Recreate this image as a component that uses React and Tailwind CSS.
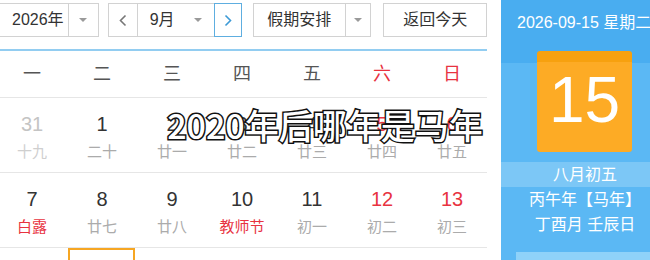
import { useState } from 'react'

const weekdays = [
  { t: '一' }, { t: '二' }, { t: '三' }, { t: '四' }, { t: '五' },
  { t: '六', red: true }, { t: '日', red: true },
]

const rows = [
  [
    { d: '31', l: '十九', other: true },
    { d: '1', l: '二十' },
    { d: '2', l: '廿一' },
    { d: '3', l: '廿二' },
    { d: '4', l: '廿三' },
    { d: '5', l: '廿四', weekend: true },
    { d: '6', l: '廿五', weekend: true },
  ],
  [
    { d: '7', l: '白露', hl: true },
    { d: '8', l: '廿七' },
    { d: '9', l: '廿八' },
    { d: '10', l: '教师节', hl: true },
    { d: '11', l: '初一' },
    { d: '12', l: '初二', weekend: true },
    { d: '13', l: '初三', weekend: true },
  ],
  [
    { d: '14', l: '初四' },
    { d: '15', l: '初五', today: true },
    { d: '16', l: '初六' },
    { d: '17', l: '初七' },
    { d: '18', l: '初八' },
    { d: '19', l: '初九', weekend: true },
    { d: '20', l: '初十', weekend: true },
  ],
]

function Caret() {
  return <span className="w-0 h-0 border-l-[4px] border-r-[4px] border-t-[4px] border-l-transparent border-r-transparent border-t-[#9a9a9a]" />
}

function Chevron({ right, color }) {
  return (
    <svg width="8" height="13" viewBox="0 0 8 13">
      <polyline
        points={right ? '1.5,1.5 6.5,6.5 1.5,11.5' : '6.5,1.5 1.5,6.5 6.5,11.5'}
        fill="none"
        stroke={color}
        strokeWidth="1.6"
      />
    </svg>
  )
}

function Cell({ c }) {
  const num = c.other ? 'text-[#c4c4c4]' : c.weekend ? 'text-[#e8333f]' : 'text-[#333]'
  const lunar = c.hl ? 'text-[#e8333f]' : c.other ? 'text-[#cfcfcf]' : 'text-[#ababab]'
  return (
    <div className="relative h-[75px] border-b border-[#e6e6e6] flex flex-col items-center pt-[14px]">
      {c.today && <div className="absolute left-[1px] right-[2px] top-0 bottom-0 border-2 border-[#f6a623]" />}
      <div className={`text-[20px] leading-[24px] ${num}`}>{c.d}</div>
      <div className={`mt-[6px] text-[15px] leading-[20px] ${lunar}`}>{c.l}</div>
    </div>
  )
}

function App() {
  const [month] = useState('9月')
  return (
    <div className="relative w-[650px] h-[260px] overflow-hidden bg-white flex font-['Liberation_Sans','Noto_Sans_CJK_SC',sans-serif]">
      <div className="w-[501px] shrink-0">
        <div className="w-[487px] h-[51px] pt-[3px] flex items-start border-b-2 border-[#92cdf1] text-[16px] text-[#333]">
          <div className="-ml-px w-[100px] h-[34px] border border-[#d2d2d2] flex">
            <div className="w-[69px] border-r border-[#d2d2d2] pl-[12px] flex items-center">2026年</div>
            <div className="flex-1 flex items-center justify-center"><Caret /></div>
          </div>
          <div className="ml-[9px] flex h-[34px]">
            <div className="w-[30px] border border-[#d2d2d2] flex items-center justify-center"><Chevron color="#777" /></div>
            <div className="w-[76px] border-y border-[#d2d2d2] flex items-center justify-between pl-[12px] pr-[12px]">
              <span>{month}</span>
              <Caret />
            </div>
            <div className="w-[28px] border border-[#5eaee0] flex items-center justify-center"><Chevron right color="#3d9ad6" /></div>
          </div>
          <div className="ml-[11px] w-[119px] h-[34px] border border-[#d2d2d2] flex">
            <div className="w-[92px] border-r border-[#d2d2d2] flex items-center justify-center">假期安排</div>
            <div className="flex-1 flex items-center justify-center"><Caret /></div>
          </div>
          <div className="ml-[12px] w-[104px] h-[34px] border border-[#d2d2d2] flex items-center justify-center">返回今天</div>
        </div>

        <div className="-ml-[3px] w-[490px]">
          <div className="grid grid-cols-7 h-[47px] border-b border-[#e6e6e6]">
            {weekdays.map((w) => (
              <div key={w.t} className={`flex items-center justify-center text-[18px] ${w.red ? 'text-[#e8333f]' : 'text-[#555]'}`}>{w.t}</div>
            ))}
          </div>
          {rows.map((r, i) => (
            <div key={i} className="grid grid-cols-7">
              {r.map((c) => <Cell key={c.d} c={c} />)}
            </div>
          ))}
        </div>
      </div>

      <div className="w-[168px] shrink-0 bg-[#5bb8f4] text-white flex flex-col">
        <div className="h-[53px] bg-[#49adf0] pl-[16px] pt-[13px] text-[16px] leading-[20px] whitespace-nowrap">2026-09-15 星期二</div>
        <div className="h-[12px] bg-[#49adf0] pl-[36px]">
          <div className="w-[95px] h-[12px] bg-[#f7a10f] rounded-t-[3px]" />
        </div>
        <div className="pl-[36px]">
          <div className="w-[95px] h-[90px] bg-[#fdab25] rounded-b-[3px] flex items-center justify-center -mt-px">
            <span className="text-[64px] leading-none -mt-[14px]">15</span>
          </div>
        </div>
        <div className="mt-[10px] h-[26px] bg-[#7cc7f6] flex items-center justify-center text-[16px]">八月初五</div>
        <div className="text-center text-[16px] leading-[25px]">丙午年【马年】</div>
        <div className="text-center text-[16px] leading-[25px]">丁酉月 壬辰日</div>
        <div className="mt-[15px] mx-[15px] h-[8px] bg-[#8fd2f9]" />
      </div>

      <div className="absolute left-0 top-[105px] w-[650px] text-center text-[34px] leading-[40px] text-white font-['Noto_Sans_CJK_SC',sans-serif] font-medium [paint-order:stroke_fill] [-webkit-text-stroke:3px_#111]">
        2020年后哪年是马年
      </div>
    </div>
  )
}

export default App
